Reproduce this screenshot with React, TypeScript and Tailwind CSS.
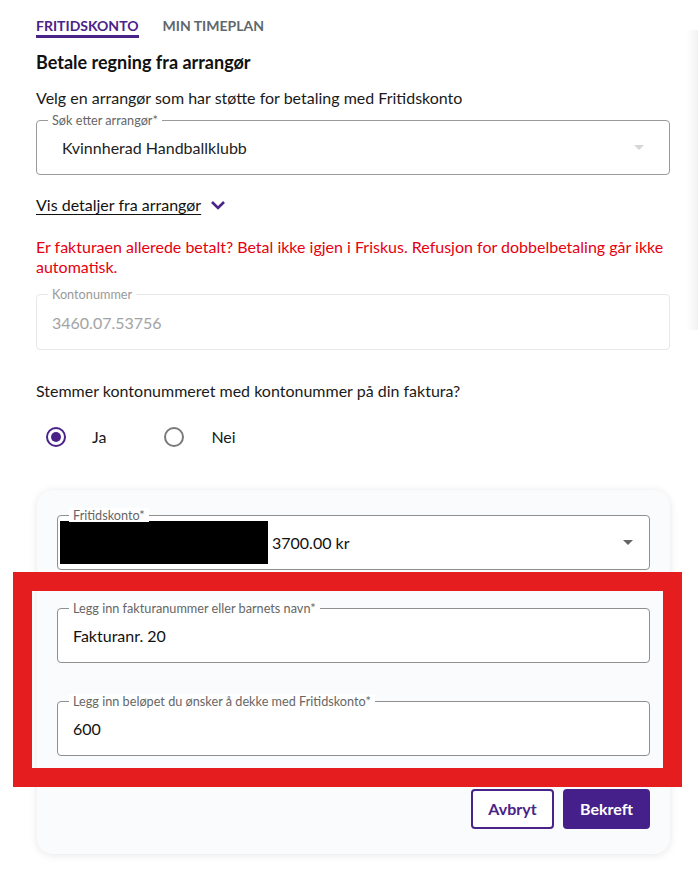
import React from "react";

function Field({
  label,
  children,
  className = "",
  borderClass = "border-[#9b9b9b]",
  labelClass = "text-[#666]",
}: {
  label: string;
  children: React.ReactNode;
  className?: string;
  borderClass?: string;
  labelClass?: string;
}) {
  return (
    <div className={`relative h-[55px] rounded-[4px] border bg-white flex items-center ${borderClass} ${className}`}>
      <span className={`absolute -top-[8px] left-[11px] px-[4px] bg-white text-[12.7px] leading-[14px] ${labelClass}`}>
        {label}
      </span>
      {children}
    </div>
  );
}

export default function App() {
  return (
    <div className="relative w-[698px] h-[869px] overflow-hidden bg-white font-['Lato',sans-serif] text-[#1a1a1a]">
      <div className="absolute right-0 top-[30px] w-[12px] h-[300px] bg-gradient-to-r from-transparent to-[#f2f2f2]" />
      <div className="pl-[36px] w-[670px]">
        {/* tabs */}
        <div className="flex gap-[24px] pt-[17px]">
          <span className="text-[14px] leading-[18px] font-bold text-[#4a2388] border-b-[3px] border-[#4a2388] pb-[0px]">
            FRITIDSKONTO
          </span>
          <span className="text-[14px] leading-[18px] font-bold text-[#5f686c]">MIN TIMEPLAN</span>
        </div>

        <h1 className="mt-[12px] text-[18px] leading-[24px] font-bold text-[#111]">Betale regning fra arrangør</h1>
        <p className="mt-[12px] text-[16px] leading-[24px] text-[#1a1a1a]">
          Velg en arrangør som har støtte for betaling med Fritidskonto
        </p>

        <Field label="Søk etter arrangør*" className="mt-[10px]">
          <span className="pl-[25px] text-[16px] text-[#222]">Kvinnherad Handballklubb</span>
          <span className="ml-auto mr-[25px] w-0 h-0 border-l-[5px] border-r-[5px] border-t-[5px] border-l-transparent border-r-transparent border-t-[#d6d6d6]" />
        </Field>

        <div className="mt-[18px] flex items-center gap-[9px] text-[16px] leading-[24px]">
          <span className="underline underline-offset-[3px] text-[#111]">Vis detaljer fra arrangør</span>
          <svg width="16" height="12" viewBox="0 0 16 12">
            <polyline points="2,3 8,9 14,3" fill="none" stroke="#4a2388" strokeWidth="2.6" />
          </svg>
        </div>

        <p className="mt-[20px] text-[16px] leading-[20px] text-[#e6000f]">
          Er fakturaen allerede betalt? Betal ikke igjen i Friskus. Refusjon for dobbelbetaling går ikke automatisk.
        </p>

        <Field
          label="Kontonummer"
          className="mt-[17px] h-[56px]"
          borderClass="border-[#e8e8e8]"
          labelClass="text-[#9a9a9a]"
        >
          <span className="pl-[15px] pt-[2px] text-[16px] text-[#a3a3a3]">3460.07.53756</span>
        </Field>

        <p className="mt-[29px] text-[16px] leading-[24px] text-[#1a1a1a]">
          Stemmer kontonummeret med kontonummer på din faktura?
        </p>

        <div className="mt-[22px] flex items-center h-[24px] text-[16px]">
          <span className="ml-[10px] w-[20px] h-[20px] rounded-full border-[2px] border-[#4a2388] flex items-center justify-center">
            <span className="w-[10px] h-[10px] rounded-full bg-[#4a2388]" />
          </span>
          <span className="ml-[26px]">Ja</span>
          <span className="ml-[58px] w-[20px] h-[20px] rounded-full border-[2px] border-[#7a7a7a]" />
          <span className="ml-[27px]">Nei</span>
        </div>

        {/* card */}
        <div className="mt-[41px] ml-[1px] w-[633px] rounded-[16px] bg-[#fafbfc] shadow-[0_1px_8px_rgba(0,0,0,0.10)] px-[20px] pt-[25px] pb-[25px]">
          <Field label="Fritidskonto*" borderClass="border-[#8f8f8f]">
            <span className="ml-[2px] w-[208px] h-[43px] bg-black" />
            <span className="ml-[4px] text-[16px] text-[#111]">3700.00 kr</span>
            <span className="ml-auto mr-[16px] w-0 h-0 border-l-[5px] border-r-[5px] border-t-[5px] border-l-transparent border-r-transparent border-t-[#666]" />
          </Field>
          <Field label="Legg inn fakturanummer eller barnets navn*" className="mt-[38px]" borderClass="border-[#8f8f8f]">
            <span className="pl-[15px] text-[16px] text-[#111]">Fakturanr. 20</span>
          </Field>
          <Field label="Legg inn beløpet du ønsker å dekke med Fritidskonto*" className="mt-[38px]" borderClass="border-[#8f8f8f]">
            <span className="pl-[15px] text-[16px] text-[#111]">600</span>
          </Field>
          <div className="mt-[33px] flex justify-end gap-[9px]">
            <button className="w-[83px] h-[40px] rounded-[4px] border-[2px] border-[#4a2388] bg-white text-[16px] font-bold text-[#4a2388]">
              Avbryt
            </button>
            <button className="w-[87px] h-[40px] rounded-[4px] bg-[#46208a] text-[16px] font-bold text-white">
              Bekreft
            </button>
          </div>
        </div>
      </div>

      {/* annotation box */}
      <div className="absolute left-[13px] top-[572px] w-[669px] h-[215px] border-[19px] border-[#e51d1f]" />
    </div>
  );
}
